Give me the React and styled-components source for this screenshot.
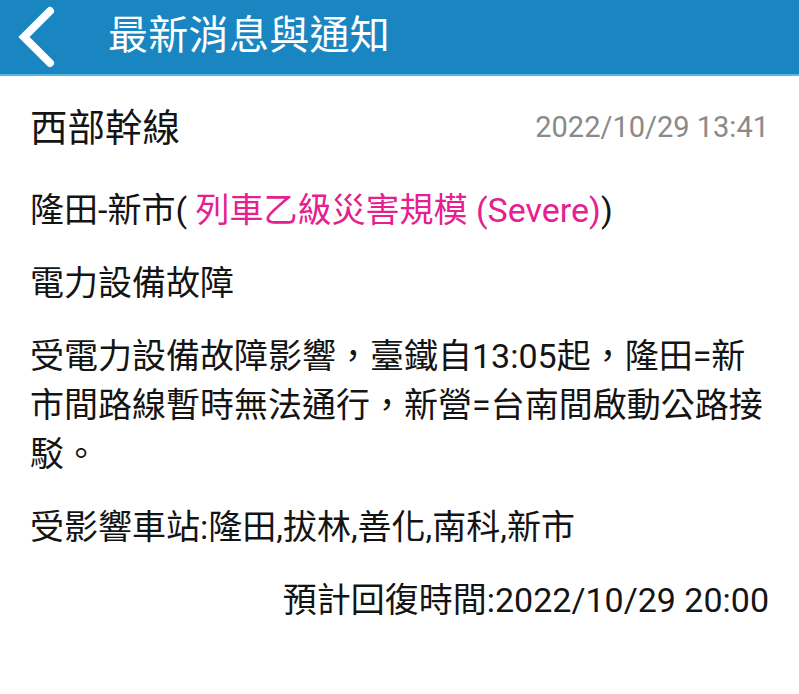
import React from "react";
import styled, { createGlobalStyle } from "styled-components";

const Global = createGlobalStyle`
  html, body { margin: 0; padding: 0; background: #ffffff; }
  body { font-family: Roboto, "Noto Sans CJK TC", sans-serif; }
  * { box-sizing: border-box; }
`;

const Page = styled.div`
  width: 799px;
  min-height: 694px;
  background: #ffffff;
  display: flex;
  flex-direction: column;
`;

const Header = styled.header`
  height: 76px;
  background: #1a86c1;
  border-bottom: 2px solid #56b6e6;
  display: flex;
  align-items: center;
  padding-left: 12px;
  gap: 48px;
`;

const BackButton = styled.button`
  width: 48px;
  height: 64px;
  padding: 0;
  border: none;
  background: transparent;
  display: flex;
  align-items: center;
  justify-content: center;
`;

const HeaderTitle = styled.h1`
  margin: 0;
  font-size: 40px;
  font-weight: 400;
  color: #ffffff;
  line-height: 1;
  letter-spacing: 0.3px;
  padding-bottom: 2px;
`;

const Content = styled.main`
  display: flex;
  flex-direction: column;
  padding: 28px 30px 0 30px;
  color: #141414;
`;

const TitleRow = styled.div`
  display: flex;
  justify-content: space-between;
  align-items: flex-start;
`;

const Title = styled.div`
  font-size: 37.5px;
  line-height: 49px;
`;

const Stamp = styled.div`
  font-size: 29px;
  line-height: 38px;
  color: #8a8a8a;
  padding-top: 4px;
`;

const Line = styled.p`
  margin: ${(p) => p.$top || 24}px 0 0 0;
  font-size: 34px;
  line-height: 49px;
  text-align: ${(p) => (p.$right ? "right" : "left")};
`;

const Pink = styled.span`
  color: #e5208f;
`;

export default function App() {
  return (
    <Page>
      <Global />
      <Header>
        <BackButton aria-label="back">
          <svg width="40" height="62" viewBox="0 0 40 62">
            <polyline
              points="34,5 8,31 34,57"
              fill="none"
              stroke="#ffffff"
              strokeWidth="8"
              strokeLinecap="round"
              strokeLinejoin="miter"
            />
          </svg>
        </BackButton>
        <HeaderTitle>最新消息與通知</HeaderTitle>
      </Header>
      <Content>
        <TitleRow>
          <Title>西部幹線</Title>
          <Stamp>2022/10/29 13:41</Stamp>
        </TitleRow>
        <Line $top={33}>
          隆田-新市( <Pink>列車乙級災害規模 (Severe)</Pink>)
        </Line>
        <Line>電力設備故障</Line>
        <Line>
          受電力設備故障影響，臺鐵自13:05起，隆田=新市間路線暫時無法通行，新營=台南間啟動公路接駁。
        </Line>
        <Line>受影響車站:隆田,拔林,善化,南科,新市</Line>
        <Line $right>預計回復時間:2022/10/29 20:00</Line>
      </Content>
    </Page>
  );
}
